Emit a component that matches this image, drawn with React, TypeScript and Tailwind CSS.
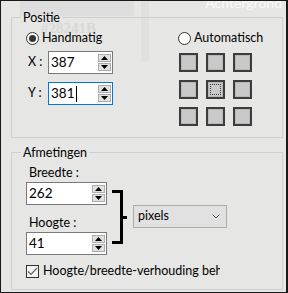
import React from "react";

const font = { fontFamily: "Lato, 'Noto Sans', sans-serif" };

function Spin() {
  return (
    <div className="flex flex-col gap-[1px] py-[2px] pr-[1px]">
      <button type="button" className="flex h-[8px] w-[13px] items-center justify-center border border-[#adadad] bg-[#e1e1e1]">
        <svg width="7" height="4" viewBox="0 0 7 4"><path d="M0 4L3.5 0L7 4Z" fill="#000" /></svg>
      </button>
      <button type="button" className="flex h-[8px] w-[13px] items-center justify-center border border-[#adadad] bg-[#e1e1e1]">
        <svg width="7" height="4" viewBox="0 0 7 4"><path d="M0 0L3.5 4L7 0Z" fill="#000" /></svg>
      </button>
    </div>
  );
}

function NumberBox({ value, width, focused }: { value: string; width: string; focused?: boolean }) {
  return (
    <div
      className={`flex h-[23px] ${width} items-stretch justify-between border bg-white ${
        focused ? "border-[#0078d7]" : "border-[#7a7a7a]"
      }`}
    >
      <div className="flex items-center pl-[2px] text-[13.5px] leading-none text-black">
        {value}
        {focused ? <span className="ml-[1px] h-[16px] w-[1px] bg-black" /> : null}
      </div>
      <Spin />
    </div>
  );
}

function Radio({ checked, label }: { checked?: boolean; label: string }) {
  return (
    <div className="flex h-[15px] items-center gap-[3px]">
      <span className="flex h-[13px] w-[13px] items-center justify-center rounded-full border border-[#333] bg-white">
        {checked ? <span className="h-[7px] w-[7px] rounded-full bg-[#333]" /> : null}
      </span>
      <span className="text-[12.5px] leading-none text-black">{label}</span>
    </div>
  );
}

function Cell({ selected }: { selected?: boolean }) {
  return (
    <div className="flex h-[19px] w-[19px] items-center justify-center border-2 border-[#3c3c3c] bg-[#c9c9c9] shadow-[inset_0_0_0_1px_#b8b8b8]">
      {selected ? <div className="h-[11px] w-[11px] border border-dotted border-[#3c3c3c]" /> : null}
    </div>
  );
}

export default function App() {
  return (
    <div
      className="relative h-[293px] w-[288px] overflow-hidden border border-r-2 border-[#1a1a1a] bg-[#e6e6e5] text-black"
      style={font}
    >
      {/* faint backdrop showing through */}
      <div className="absolute left-[19px] top-0 h-[15px] w-[114px] bg-[#dedede]" />
      <div className="absolute left-[140px] top-0 h-[60px] w-[8px] bg-[#e0e0e0]" />
      <div className="absolute right-[4px] top-[-5px] text-[14px] leading-[14px] text-white/80">Achtergrond</div>
      <div
        className="absolute left-[40px] top-[21px] text-[15px] font-bold leading-[12px] text-[#d9d9d9]"
        style={{ fontFamily: "'Liberation Serif', serif" }}
      >
        #28241B
      </div>

      <fieldset className="relative ml-[10px] mt-[9px] h-[128px] w-[272px] border border-[#cfcfcf]">
        <legend className="ml-[9px] px-[2px] text-[12.5px] leading-[15px]">Positie</legend>
        <div className="flex pl-[14px] pt-[6px]">
          <div className="flex w-[152px] flex-col">
            <Radio checked label="Handmatig" />
            <div className="mt-[5px] flex items-center">
              <span className="w-[22px] pl-[2px] text-[12.5px] leading-none">X :</span>
              <NumberBox value="387" width="w-[65px]" />
            </div>
            <div className="mt-[8px] flex items-center">
              <span className="w-[22px] pl-[2px] text-[12.5px] leading-none">Y :</span>
              <NumberBox value="381" width="w-[65px]" focused />
            </div>
          </div>
          <div className="flex flex-col">
            <Radio label="Automatisch" />
            <div className="ml-[1px] mt-[7px] grid grid-cols-[19px_19px_19px] gap-[8px]">
              <Cell />
              <Cell />
              <Cell />
              <Cell />
              <Cell selected />
              <Cell />
              <Cell />
              <Cell />
              <Cell />
            </div>
          </div>
        </div>
      </fieldset>

      <fieldset className="ml-[10px] mt-[7px] h-[145px] w-[272px] border border-[#cfcfcf]">
        <legend className="ml-[9px] px-[2px] text-[12.5px] leading-[15px]">Afmetingen</legend>
        <div className="flex pl-[14px] pt-[4px]">
          <div className="flex w-[81px] flex-col">
            <span className="pl-[3px] text-[12.5px] leading-[17px]">Breedte :</span>
            <div className="mt-[1px]">
              <NumberBox value="262" width="w-[81px]" />
            </div>
            <span className="mt-[9px] pl-[3px] text-[12.5px] leading-[17px]">Hoogte :</span>
            <div className="mt-[1px]">
              <NumberBox value="41" width="w-[81px]" />
            </div>
          </div>
          <svg className="ml-[5px] mt-[26px]" width="16" height="54" viewBox="0 0 16 54">
            <path d="M0 1.5H9.5V52.5H0" fill="none" stroke="#000" strokeWidth="3" />
            <path d="M11 27.5H15" stroke="#000" strokeWidth="3" />
          </svg>
          <div className="ml-[5px] mt-[41px] flex h-[23px] w-[94px] items-center justify-between border border-[#adadad] bg-[#e1e1e1] pl-[4px] pr-[6px]">
            <span className="text-[12.5px] leading-none">pixels</span>
            <svg width="8" height="5" viewBox="0 0 8 5">
              <path d="M0.5 0.5L4 4L7.5 0.5" fill="none" stroke="#555" strokeWidth="1" />
            </svg>
          </div>
        </div>
        <div className="ml-[14px] mt-[10px] flex w-[194px] items-center gap-[4px] overflow-hidden whitespace-nowrap">
          <span className="flex h-[13px] w-[13px] shrink-0 items-center justify-center border border-[#333] bg-[#f4f4f4]">
            <svg width="11" height="9" viewBox="0 0 11 9">
              <path d="M1 4.5L4 7.5L10 1" fill="none" stroke="#666" strokeWidth="1.2" />
            </svg>
          </span>
          <span className="text-[12.5px] leading-none">Hoogte/breedte-verhouding behouden</span>
        </div>
      </fieldset>
    </div>
  );
}
